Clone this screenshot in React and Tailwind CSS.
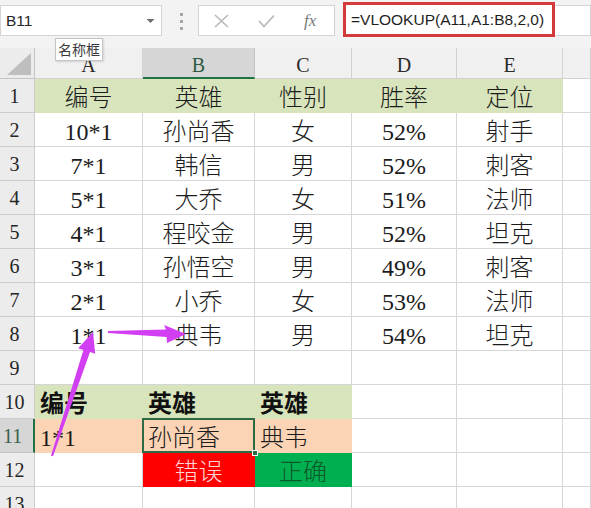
import React from "react";

const FONT_CELL = { fontFamily: "'Liberation Serif', 'Noto Sans CJK SC', serif" };
const FONT_UI = { fontFamily: "'Liberation Sans', 'Noto Sans CJK SC', sans-serif" };

// cell fill variants (filled cells hide their own gridlines)
const FILL = {
  none: "bg-white border-[#d6d6d6]",
  green: "bg-[#d8e4bc] border-[#d8e4bc]",
  peach: "bg-[#fbd4b5] border-[#fbd4b5]",
  red: "bg-[#ff0000] border-[#ff0000]",
  ok: "bg-[#00b050] border-[#00b050]",
};

const ALIGN = {
  c: "justify-center",
  l: "justify-start pl-[5px]",
};

const TONE = {
  base: "text-[#1c1c1c] font-light",
  bold: "text-[#111] font-bold",
  pink: "text-[#ffd6d6] font-light",
  dark: "text-[#0b5a2a] font-light",
};

const H = (t) => ({ t, fill: "green", align: "c" });
const D = (t) => ({ t, fill: "none", align: "c" });
const E = { t: "", fill: "none", align: "c" };

const rows = [
  [H("编号"), H("英雄"), H("性别"), H("胜率"), H("定位"), E],
  [D("10*1"), D("孙尚香"), D("女"), D("52%"), D("射手"), E],
  [D("7*1"), D("韩信"), D("男"), D("52%"), D("刺客"), E],
  [D("5*1"), D("大乔"), D("女"), D("51%"), D("法师"), E],
  [D("4*1"), D("程咬金"), D("男"), D("52%"), D("坦克"), E],
  [D("3*1"), D("孙悟空"), D("男"), D("49%"), D("刺客"), E],
  [D("2*1"), D("小乔"), D("女"), D("53%"), D("法师"), E],
  [D("1*1"), D("典韦"), D("男"), D("54%"), D("坦克"), E],
  [E, E, E, E, E, E],
  [
    { t: "编号", fill: "green", align: "l", tone: "bold" },
    { t: "英雄", fill: "green", align: "l", tone: "bold" },
    { t: "英雄", fill: "green", align: "l", tone: "bold" },
    E, E, E,
  ],
  [
    { t: "1*1", fill: "peach", align: "l" },
    { t: "孙尚香", fill: "peach", align: "l", selected: true },
    { t: "典韦", fill: "peach", align: "l" },
    E, E, E,
  ],
  [
    E,
    { t: "错误", fill: "red", align: "c", tone: "pink" },
    { t: "正确", fill: "ok", align: "c", tone: "dark" },
    E, E, E,
  ],
  [E, E, E, E, E, E],
];

const letters = ["A", "B", "C", "D", "E", ""];

function Toolbar() {
  return (
    <div className="relative h-[48px] bg-[#f3f3f3] flex items-start" style={FONT_UI}>
      {/* name box */}
      <div className="mt-[5px] w-[162px] h-[31px] bg-white border border-[#d4d4d4] flex items-center justify-between pl-[5px] pr-[6px]">
        <span className="text-[15.5px] text-[#262626]">B11</span>
        <svg width="9" height="6" viewBox="0 0 9 6">
          <path d="M0.5 1 L8.5 1 L4.5 5 Z" fill="#6e6e6e" />
        </svg>
      </div>
      {/* grip dots */}
      <div className="ml-[18px] mt-[13px] flex flex-col gap-[4px]">
        <span className="block w-[3px] h-[3px] bg-[#a6a6a6]" />
        <span className="block w-[3px] h-[3px] bg-[#a6a6a6]" />
        <span className="block w-[3px] h-[3px] bg-[#a6a6a6]" />
      </div>
      {/* cancel / enter / fx */}
      <div className="ml-[15px] mt-[5px] w-[137px] h-[31px] bg-white border border-[#d4d4d4] flex items-center">
        <svg className="ml-[15px]" width="15" height="14" viewBox="0 0 15 14">
          <path d="M1 1 L14 13 M14 1 L1 13" stroke="#b9b9b9" strokeWidth="1.6" fill="none" />
        </svg>
        <svg className="ml-[29px]" width="17" height="14" viewBox="0 0 17 14">
          <path d="M1 7 L6 12.5 L16 1.5" stroke="#b9b9b9" strokeWidth="1.8" fill="none" />
        </svg>
        <span
          className="ml-[29px] text-[17px] italic text-[#7a7a7a] leading-none"
          style={{ fontFamily: "'Liberation Serif', serif" }}
        >
          fx
        </span>
      </div>
      {/* formula input */}
      <div className="ml-[8px] mt-[2px] w-[212px] h-[35px] bg-white border-[3px] border-[#d43a3a] flex items-center pl-[5px]">
        <span className="text-[15.5px] text-[#1f1f1f] whitespace-nowrap">=VLOOKUP(A11,A1:B8,2,0)</span>
      </div>
      <div className="flex-1 mt-[5px] h-[31px] bg-white border-y border-r border-[#d4d4d4]" />
      {/* name box tooltip */}
      <div
        className="absolute left-[55px] top-[38px] w-[48px] h-[23px] bg-white border border-[#c4c4c4] flex items-center justify-center text-[14px] text-[#3a3a3a] z-30 shadow-[1px_1px_2px_rgba(0,0,0,0.12)]"
        style={{ fontFamily: "'Noto Sans CJK SC', sans-serif" }}
      >
        名称框
      </div>
    </div>
  );
}

function Arrows() {
  return (
    <svg className="absolute left-0 top-0 pointer-events-none z-20" width="591" height="508" viewBox="0 0 591 508">
      <polygon
        points="108,331 166,329.5 164,325 186,334 167,343 166.5,337 108,333"
        fill="#d23ef2"
      />
      <polygon
        points="51,455.7 83.4,349.9 78.2,348.2 93,332 95.2,353.8 90,352.1 53,456.3"
        fill="#d23ef2"
      />
    </svg>
  );
}

export default function App() {
  return (
    <div className="relative w-[591px] h-[508px] overflow-hidden bg-white">
      <Toolbar />
      <div
        className="grid grid-cols-[35px_108px_112px_97px_105px_106px_1fr] grid-rows-[31px_repeat(13,34px)]"
        style={FONT_CELL}
      >
        {/* corner */}
        <div className="bg-[#ececec] border-r border-b border-[#c4c4c4] relative">
          <svg className="absolute left-[7px] top-[5px]" width="25" height="23" viewBox="0 0 25 23">
            <path d="M24 0 L24 22 L0 22 Z" fill="#bebebe" />
          </svg>
        </div>
        {letters.map((l, i) =>
          i === 1 ? (
            <div
              key={i}
              className="bg-[#d6d6d6] border-r border-[#c4c4c4] border-b-2 border-b-[#217346] flex items-end justify-center pb-[2px] text-[20px] leading-none text-[#2d5b43]"
            >
              {l}
            </div>
          ) : (
            <div
              key={i}
              className="bg-[#f0f0f0] border-r border-b border-[#d2d2d2] flex items-end justify-center pb-[3px] text-[20px] leading-none text-[#2b2b2b]"
            >
              {l}
            </div>
          )
        )}
        {rows.map((cells, r) => (
          <React.Fragment key={r}>
            {r === 10 ? (
              <div className="bg-[#d6d6d6] border-r-2 border-r-[#217346] border-b border-[#c4c4c4] flex items-center pl-[3px] text-[20px] leading-none text-[#3b5f4b]">
                {r + 1}
              </div>
            ) : (
              <div className="bg-[#ececec] border-r border-b border-[#cdcdcd] flex items-center pl-[3px] text-[20px] leading-none text-[#262626]">
                <span className="w-[23px] text-center">{r + 1}</span>
              </div>
            )}
            {cells.map((c, i) => (
              <div
                key={i}
                className={`relative border-r border-b flex items-center pt-[5px] text-[24px] leading-none whitespace-nowrap ${FILL[c.fill]} ${ALIGN[c.align]} ${TONE[c.tone || "base"]}`}
              >
                {c.t}
                {c.selected && (
                  <>
                    <div className="absolute -left-[1px] -top-[1px] -right-[1px] -bottom-[1px] border-2 border-[#2e6b45] z-10" />
                    <div className="absolute -right-[4px] -bottom-[4px] w-[6px] h-[6px] bg-[#2e6b45] border border-white z-10" />
                  </>
                )}
              </div>
            ))}
          </React.Fragment>
        ))}
      </div>
      <Arrows />
    </div>
  );
}
